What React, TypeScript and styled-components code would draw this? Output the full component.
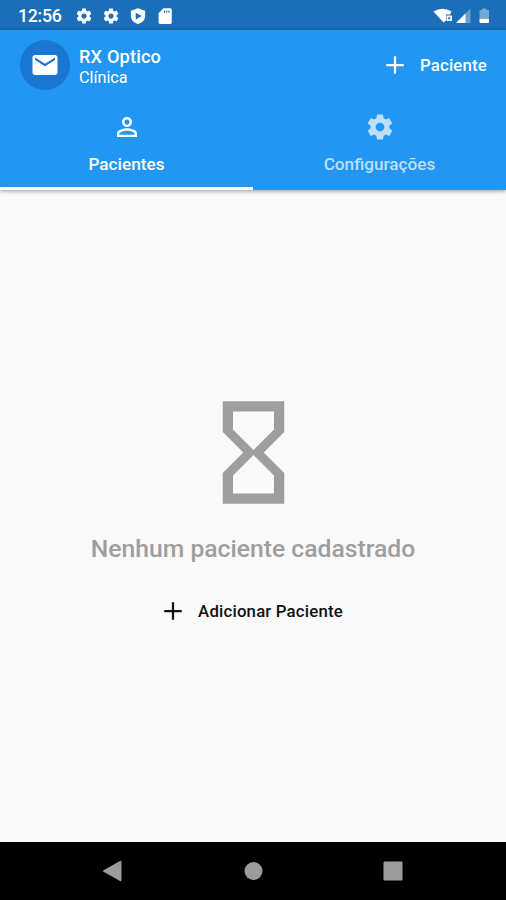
import React from 'react';
import styled, { createGlobalStyle } from 'styled-components';

const GlobalStyle = createGlobalStyle`
  * { box-sizing: border-box; }
  body { margin: 0; background: #fafafa; font-family: Roboto, sans-serif; }
`;

const paths = {
  settings:
    'M19.43 12.98c.04-.32.07-.64.07-.98s-.03-.66-.07-.98l2.11-1.65c.19-.15.24-.42.12-.64l-2-3.46c-.12-.22-.39-.3-.61-.22l-2.49 1c-.52-.4-1.08-.73-1.69-.98l-.38-2.65C14.46 2.18 14.25 2 14 2h-4c-.25 0-.46.18-.49.42l-.38 2.65c-.61.25-1.17.59-1.69.98l-2.49-1c-.23-.09-.49 0-.61.22l-2 3.46c-.13.22-.07.49.12.64l2.11 1.65c-.04.32-.07.65-.07.98s.03.66.07.98l-2.11 1.65c-.19.15-.24.42-.12.64l2 3.46c.12.22.39.3.61.22l2.49-1c.52.4 1.08.73 1.69.98l.38 2.65c.03.24.24.42.49.42h4c.25 0 .46-.18.49-.42l.38-2.65c.61-.25 1.17-.59 1.69-.98l2.49 1c.23.09.49 0 .61-.22l2-3.46c.12-.22.07-.49-.12-.64l-2.11-1.65zM12 15.5c-1.93 0-3.5-1.57-3.5-3.5s1.57-3.5 3.5-3.5 3.5 1.57 3.5 3.5-1.57 3.5-3.5 3.5z',
  person:
    'M12 5.9c1.16 0 2.1.94 2.1 2.1s-.94 2.1-2.1 2.1S9.9 9.16 9.9 8s.94-2.1 2.1-2.1m0 9c2.97 0 6.1 1.46 6.1 2.1v1.1H5.9V17c0-.64 3.13-2.1 6.1-2.1M12 4C9.79 4 8 5.79 8 8s1.79 4 4 4 4-1.79 4-4-1.79-4-4-4zm0 9c-2.67 0-8 1.34-8 4v3h16v-3c0-2.66-5.33-4-8-4z',
  hourglass:
    'M6 2v6h.01L6 8.01 10 12l-4 4 .01.01H6V22h12v-5.99h-.01L18 16l-4-4 4-3.99-.01-.01H18V2H6zm10 14.5V20H8v-3.5l4-4 4 4zm-4-5l-4-4V4h8v3.5l-4 4z',
  add: 'M19 12.900h-6.100V19h-1.800v-6.100H5v-1.800h6.100V5h1.800v6.100H19z',
  mail: 'M20 4H4c-1.1 0-1.99.9-1.99 2L2 18c0 1.1.9 2 2 2h16c1.1 0 2-.9 2-2V6c0-1.1-.9-2-2-2zm0 4l-8 5-8-5V6l8 5 8-5v2z',
  shield:
    'M12 1.500L2.500 5v6.500c0 5.500 4 9.600 9.500 11 5.500-1.400 9.500-5.500 9.500-11V5L12 1.500zM9 7.500l8 4.500-8 4.500z',
  sdCard:
    'M19 1.500h-9L3.500 8v12.500c0 1.100.9 2 2 2H19c1.100 0 2-.9 2-2v-17c0-1.100-.9-2-2-2zM12 7.500h-1.500V4.500H12zm3 0h-1.500V4.500H15zm3 0h-1.500V4.500H18z',
};

const Svg = styled.svg<{ $size: number }>`
  display: block;
  flex: none;
  width: ${(p) => p.$size}px;
  height: ${(p) => p.$size}px;
  fill: currentColor;
`;

function Icon({ name, size }: { name: keyof typeof paths; size: number }) {
  return (
    <Svg $size={size} viewBox="0 0 24 24" aria-hidden="true">
      <path fillRule="evenodd" d={paths[name]} />
    </Svg>
  );
}

const Screen = styled.div`
  width: 506px;
  height: 900px;
  display: flex;
  flex-direction: column;
  background: #fafafa;
  overflow: hidden;
`;

const StatusBar = styled.div`
  height: 30px;
  flex: none;
  display: flex;
  align-items: center;
  justify-content: space-between;
  padding: 1px 16px 0 18px;
  background: #1a6fb8;
  color: #fff;
`;

const StatusGroup = styled.div`
  display: flex;
  align-items: center;
  gap: 9px;
`;

const Clock = styled.span`
  width: 48px;
  font-size: 17.8px;
  line-height: 20px;
  font-weight: 500;
  letter-spacing: -0.3px;
`;

const SignalIcons = styled.svg`
  display: block;
  width: 57px;
  height: 18px;
  fill: #fff;
`;

const Header = styled.header`
  position: relative;
  z-index: 1;
  height: 160px;
  flex: none;
  display: flex;
  flex-direction: column;
  background: #2196f3;
  color: #fff;
  box-shadow: 0 1px 4px rgba(0, 0, 0, 0.4);
`;

const Toolbar = styled.div`
  height: 69px;
  display: flex;
  align-items: center;
  padding: 0 19px 0 20px;
`;

const Avatar = styled.div`
  width: 50px;
  height: 50px;
  display: flex;
  align-items: center;
  justify-content: center;
  border-radius: 50%;
  background: #1976d2;
`;

const Titles = styled.div`
  flex: 1;
  padding: 4px 0 0 9px;
`;

const Title = styled.div`
  font-size: 18.2px;
  line-height: 21px;
  font-weight: 500;
  letter-spacing: 0.15px;
`;

const Subtitle = styled.div`
  font-size: 16.2px;
  line-height: 21px;
`;

const Action = styled.button<{ $dark?: boolean }>`
  display: flex;
  align-items: center;
  gap: 10px;
  padding: 0;
  border: 0;
  background: none;
  color: ${(p) => (p.$dark ? '#111' : '#fff')};
  font: 500 16.8px/20px Roboto, sans-serif;
  letter-spacing: 0.18px;
`;

const Tabs = styled.div`
  flex: 1;
  display: grid;
  grid-template-columns: 1fr 1fr;
`;

const Tab = styled.div<{ $active?: boolean }>`
  display: flex;
  flex-direction: column;
  align-items: center;
  gap: 12px;
  padding-top: 13px;
  border-bottom: 3px solid ${(p) => (p.$active ? '#fff' : 'transparent')};
  color: ${(p) => (p.$active ? '#fff' : '#bcdffb')};
  font-size: 17.2px;
  line-height: 20px;
  font-weight: 500;
`;

const Content = styled.main`
  flex: 1;
  display: flex;
  flex-direction: column;
  align-items: center;
  padding-top: 201px;
  color: #9e9e9e;
`;

const EmptyMessage = styled.p`
  margin: 20px 0 32px;
  font-size: 24.7px;
  line-height: 30px;
  font-weight: 500;
  white-space: nowrap;
`;

const AddRow = styled.div`
  padding-right: 5px;
`;

const NavBar = styled.nav`
  height: 58px;
  flex: none;
  display: flex;
  align-items: center;
  justify-content: space-between;
  padding: 0 102px;
  background: #000;
`;

const NavIcon = styled.svg`
  display: block;
  width: 22px;
  height: 22px;
  fill: #9c9c9c;
`;

export default function App() {
  return (
    <Screen>
      <GlobalStyle />
      <StatusBar>
        <StatusGroup>
          <Clock>12:56</Clock>
          <Icon name="settings" size={18} />
          <Icon name="settings" size={18} />
          <Icon name="shield" size={18} />
          <Icon name="sdCard" size={18} />
        </StatusGroup>
        <SignalIcons viewBox="0 0 57 18" aria-hidden="true">
          <path d="M.5 4.500Q9.500 -1 18.500 4.500L17 7.500H13V13.500L10.500 15.500Z" />
          <path fillRule="evenodd" d="M13.500 8.500H19V14H13.500zM15.200 10.200V12.200H17.200V10.200z" />
          <path opacity=".35" d="M37.500 1.500V16H23z" />
          <path d="M32.500 6.500V16H23z" />
          <path opacity=".4" d="M46.500 3H49V1.500H53.500V3H56V13H46.500z" />
          <path d="M46.500 12H56V15Q56 16 55 16H47.500Q46.500 16 46.500 15z" />
        </SignalIcons>
      </StatusBar>
      <Header>
        <Toolbar>
          <Avatar>
            <Icon name="mail" size={30} />
          </Avatar>
          <Titles>
            <Title>RX Optico</Title>
            <Subtitle>Clínica</Subtitle>
          </Titles>
          <Action>
            <Icon name="add" size={30} />
            Paciente
          </Action>
        </Toolbar>
        <Tabs>
          <Tab $active>
            <Icon name="person" size={30} />
            Pacientes
          </Tab>
          <Tab>
            <Icon name="settings" size={30} />
            Configurações
          </Tab>
        </Tabs>
      </Header>
      <Content>
        <Icon name="hourglass" size={123} />
        <EmptyMessage>Nenhum paciente cadastrado</EmptyMessage>
        <AddRow>
          <Action $dark>
            <Icon name="add" size={30} />
            Adicionar Paciente
          </Action>
        </AddRow>
      </Content>
      <NavBar>
        <NavIcon viewBox="0 0 22 22" aria-hidden="true">
          <path d="M1.500 10.300Q.5 11 1.500 11.700L18 21Q19.500 21.500 19.500 20V2Q19.500.5 18 1z" />
        </NavIcon>
        <NavIcon viewBox="0 0 22 22" aria-hidden="true">
          <circle cx="11.500" cy="11" r="9" />
        </NavIcon>
        <NavIcon viewBox="0 0 22 22" aria-hidden="true">
          <rect x="1.500" y="1.500" width="19" height="19" rx="1" />
        </NavIcon>
      </NavBar>
    </Screen>
  );
}
